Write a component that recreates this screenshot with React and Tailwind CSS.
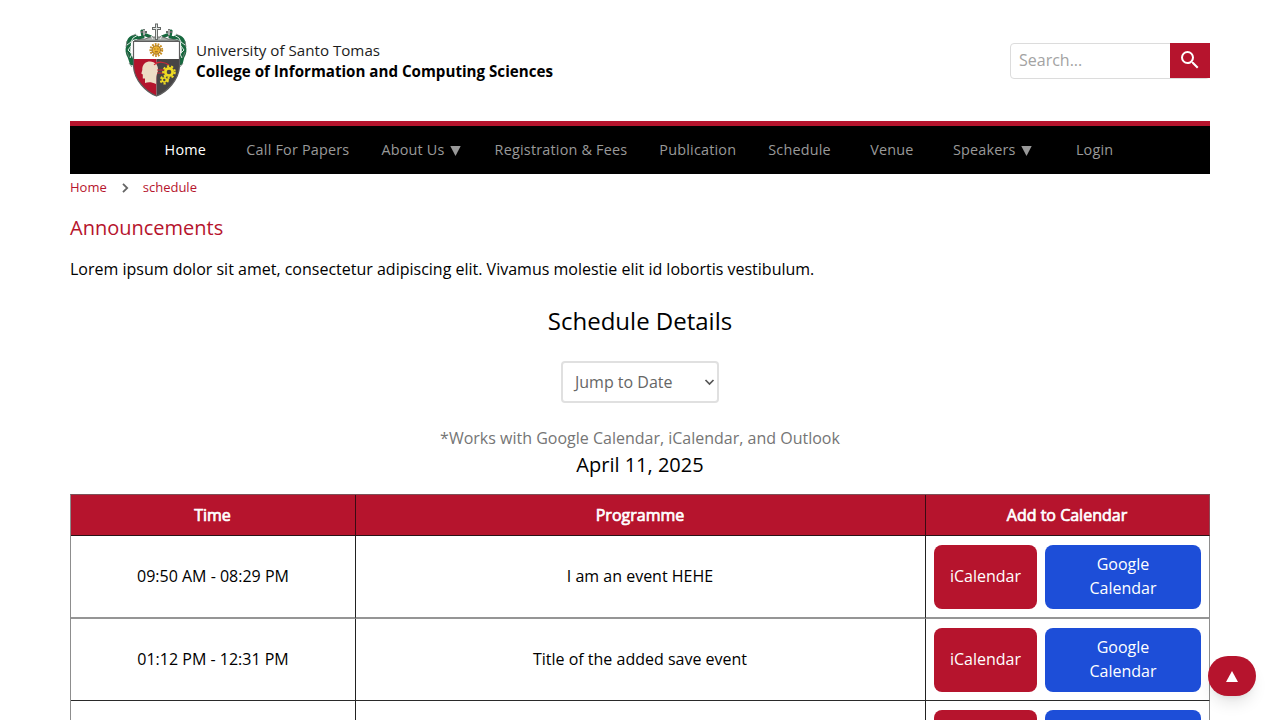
import React from "react";

const NAV = [
  { label: "Home", active: true },
  { label: "Call For Papers" },
  { label: "About Us", menu: true },
  { label: "Registration & Fees" },
  { label: "Publication" },
  { label: "Schedule" },
  { label: "Venue" },
  { label: "Speakers", menu: true },
  { label: "Login" },
];

const EVENTS = [
  { time: "09:50 AM - 08:29 PM", title: "I am an event HEHE", line: "border-b-2 border-b-[#959595] h-[83px]" },
  { time: "01:12 PM - 12:31 PM", title: "Title of the added save event", line: "border-b border-b-[#2a2a2a] h-[82px]" },
  { time: "", title: "", line: "border-b border-b-[#2a2a2a] h-[82px]" },
];

function Gear({ cx, cy, r, hole }) {
  return (
    <g>
      <circle cx={cx} cy={cy} r={r} fill="#efdb22" />
      <circle cx={cx} cy={cy} r={r + 0.8} fill="none" stroke="#efdb22" strokeWidth="2" strokeDasharray="2.2 1.9" />
      <circle cx={cx} cy={cy} r={hole} fill="#4a4646" />
    </g>
  );
}

function Crest() {
  return (
    <svg className="h-[76px] w-[64px] shrink-0" viewBox="0 0 64 76">
      <g fill="none" stroke="#17693f" strokeLinecap="round" strokeLinejoin="round">
        <path d="M12 14 C6 14 4 19 4.5 23 C3 28 4 31 6 34 L8 40" strokeWidth="4.6" />
        <path d="M52 14 C58 14 60 19 59.5 23 C61 28 60 31 58 34 L56.5 40" strokeWidth="4.6" />
        <path d="M18 8 L19 14 L14 15 M27 14 L22 12 M47 8 L46 14 L51 15 M38 14 L43 12" strokeWidth="3.2" />
      </g>
      <g fill="none" stroke="#dfe8e2" strokeWidth="1">
        <path d="M14 12 L9 15 L7 19 L3 22 M7 23 L4 27 L8 31 L6 35" />
        <path d="M50 12 L55 15 L57 19 L61 22 M57 23 L60 27 L56 31 L58 35" />
      </g>
      <g fill="none" stroke="#777b79" strokeWidth="0.8">
        <path d="M8 13 L12 11 M3 18 L2 24 M3 29 L5 34 M5 40 L8 44 M56 13 L52 11 M61 18 L62 24 M61 29 L59 34 M59 40 L56 44" />
      </g>
      <path d="M10 18 L15 16.5 L21 16 L26 14 H39 L44 16 L50 16.5 L55 18 Z" fill="#a9afab" stroke="#555957" strokeWidth="0.8" />
      <g stroke="#646866" strokeWidth="3">
        <path d="M32.5 0.5 V17 M28 5.5 H37" />
        <path d="M20 6 V13 M17 9 H23 M45 6 V13 M42 9 H48" strokeWidth="1.8" />
      </g>
      <g stroke="#e2e6e4" strokeWidth="1.1">
        <path d="M32.5 1.5 V16 M29 5.5 H36 M20 7 V12 M45 7 V12 M27 13 L29 16 M38 13 L36 16" />
      </g>
      <path d="M9.5 18.5 H55.5 V43 C55 57 43 69 32.5 73 C22 69 10 57 9.5 43 Z" fill="#fff" />
      <path d="M9.5 36 H32.5 V73 C22 69 10 57 9.5 43 Z" fill="#b3142d" />
      <path d="M32.5 36 H55.5 V43 C55 57 43 69 32.5 73 Z" fill="#474546" />
      <path d="M9.5 18.5 H55.5 V43 C55 57 43 69 32.5 73 C22 69 10 57 9.5 43 Z" fill="none" stroke="#5d5d5d" strokeWidth="1.2" />
      <circle cx="32.3" cy="27" r="5.4" fill="none" stroke="#c99026" strokeWidth="3" strokeDasharray="1.6 1" />
      <circle cx="32.3" cy="27" r="4.2" fill="#edb331" stroke="#87591f" strokeWidth="0.7" />
      <path d="M30.3 26 H31.4 M33.3 26 H34.4 M30.8 28.8 H33.9" stroke="#794718" strokeWidth="0.8" />
      <path d="M21 60 V55.5 H18.8 V51.5 L17.3 50.5 L18.3 47 C18 41 22 38.5 26 38.5 C31 38.5 34.5 42 34 47.5 C33.7 50.5 32 52 32 55 V61 C28 59 24 59 21 60 Z" fill="#ecdcc5" />
      <path d="M30 42 C34 37.5 41 39 45 42 M33 47 H42 M33 50 H41" fill="none" stroke="#d72835" strokeWidth="1.1" />
      <Gear cx={45} cy={49} r={5} hole={2.3} />
      <Gear cx={40.3} cy={57} r={2.8} hole={1.2} />
    </svg>
  );
}

function Header() {
  return (
    <header className="flex h-[121px] shrink-0 items-center justify-between">
      <div className="flex items-center gap-[8px] pl-[54px]">
        <Crest />
        <div className="text-black">
          <p className="text-[15.15px] leading-[21px] text-[#1c1c1c]">University of Santo Tomas</p>
          <p className="text-[15.15px] leading-[21px] font-bold">College of Information and Computing Sciences</p>
        </div>
      </div>
      <div className="flex h-[36px] w-[200px] rounded-[4px] border border-[#dcdcdc]">
        <input
          className="min-w-0 flex-1 pb-[2px] pl-2 text-[16px] outline-none placeholder:text-[#a3a3a3]"
          placeholder="Search..."
        />
        <button className="-mt-px -mr-px flex w-[40px] items-center justify-center bg-[#b6142d]" aria-label="Search">
          <svg className="size-6" viewBox="0 0 24 24" fill="#fff">
            <path d="M15.5 14h-.79l-.28-.27A6.47 6.47 0 0 0 16 9.5 6.5 6.5 0 1 0 9.5 16c1.61 0 3.09-.59 4.23-1.57l.27.28v.79l5 4.99L20.49 19l-4.99-5zm-6 0C7.01 14 5 11.99 5 9.5S7.01 5 9.5 5 14 7.01 14 9.5 11.99 14 9.5 14z" />
          </svg>
        </button>
      </div>
    </header>
  );
}

function Schedule() {
  return (
    <table className="mt-[15px] w-full shrink-0 table-fixed border-separate border-spacing-0 border-t border-l border-t-[#7d5158] border-l-[#8d8d8d] text-center text-[16px]">
      <colgroup>
        <col className="w-[285px]" />
        <col className="w-[570px]" />
        <col className="w-[284px]" />
      </colgroup>
      <thead>
        <tr className="bg-[#b6142d] text-white">
          {["Time", "Programme", "Add to Calendar"].map((h, i) => (
            <th
              key={h}
              className={`h-[41px] border-b border-b-[#2a1216] p-0 pr-px font-normal [-webkit-text-stroke:0.7px_white] ${i < 2 ? "border-r border-r-[#3a0b13]" : "border-r border-r-[#8e4a55]"}`}
            >
              {h}
            </th>
          ))}
        </tr>
      </thead>
      <tbody>
        {EVENTS.map((e, i) => (
          <tr key={i}>
            <td className={`border-r border-r-[#222] p-0 pb-[2px] ${e.line}`}>{e.time}</td>
            <td className={`border-r border-r-[#222] p-0 pr-px pb-[2px] ${e.line}`}>{e.title}</td>
            <td className={`border-r border-r-[#8d8d8d] p-0 ${e.line}`}>
              <div className="flex gap-[8px] px-[8px] text-white">
                <button className="h-[64px] w-[103px] rounded-[8px] bg-[#b6142d] pb-[2px]">{e.time && "iCalendar"}</button>
                <button className="h-[64px] flex-1 rounded-[8px] bg-[#1d4ed8] px-8 pb-[2px] leading-6">
                  {e.time && "Google Calendar"}
                </button>
              </div>
            </td>
          </tr>
        ))}
      </tbody>
    </table>
  );
}

export default function App() {
  return (
    <div className="relative flex h-[720px] w-full flex-col overflow-hidden bg-white px-[70px] font-['Open_Sans','Noto_Sans',sans-serif] text-black">
      <Header />
      <nav className="flex h-[53px] shrink-0 justify-center border-t-[5px] border-[#b6142d] bg-black">
        {NAV.map((n) => (
          <a
            key={n.label}
            className={`flex min-w-[90px] items-center justify-center gap-[5px] px-4 text-[14.4px] font-medium tracking-[0.2px] whitespace-nowrap ${n.active ? "text-white" : "text-[#999]"}`}
          >
            {n.label}
            {n.menu && (
              <svg className="mt-px mr-[2px] h-[10px] w-[11px]" viewBox="0 0 11 10" fill="currentColor">
                <path d="M0.3 0 H10.7 L5.5 10 Z" />
              </svg>
            )}
          </a>
        ))}
      </nav>
      <div className="flex h-[27px] shrink-0 items-center text-[13px] text-[#b6142d]">
        <span>Home</span>
        <svg className="mr-[14px] ml-[14px] h-[10px] w-[8px]" viewBox="0 0 8 10" fill="none" stroke="#666" strokeWidth="1.8">
          <path d="M2 0.8 L6.2 5 L2 9.2" />
        </svg>
        <span>schedule</span>
      </div>
      <h2 className="mt-[13px] shrink-0 text-[20px] leading-[28px] text-[#b6142d]">Announcements</h2>
      <p className="mt-[15px] shrink-0 text-[16px] leading-6">
        Lorem ipsum dolor sit amet, consectetur adipiscing elit. Vivamus molestie elit id lobortis vestibulum.
      </p>
      <h1 className="mt-[24px] shrink-0 text-center text-[24px] leading-[32px]">Schedule Details</h1>
      <div className="mt-[24px] flex h-[42px] w-[158px] shrink-0 items-center justify-between self-center rounded-[4px] border-2 border-[#e0e0e0] pr-[2px] pl-[12px] text-[16px] text-[#666]">
        <span>Jump to Date</span>
        <svg className="h-[8px] w-[11px]" viewBox="0 0 11 8" fill="none" stroke="#555" strokeWidth="1.7">
          <path d="M1.5 2 L5.5 6 L9.5 2" />
        </svg>
      </div>
      <p className="mt-[23px] shrink-0 text-center text-[16px] leading-6 text-[#757575]">
        *Works with Google Calendar, iCalendar, and Outlook
      </p>
      <h3 className="mt-px shrink-0 text-center text-[20px] leading-[28px]">April 11, 2025</h3>
      <Schedule />
      <button
        className="absolute right-6 bottom-6 flex h-10 w-12 items-center justify-center rounded-[20px] bg-[#b6142d] text-white shadow-lg"
        aria-label="Back to top"
      >
        <svg className="mt-px h-[11px] w-[12px]" viewBox="0 0 12 11" fill="currentColor">
          <path d="M6 0 L12 11 H0 Z" />
        </svg>
      </button>
    </div>
  );
}
